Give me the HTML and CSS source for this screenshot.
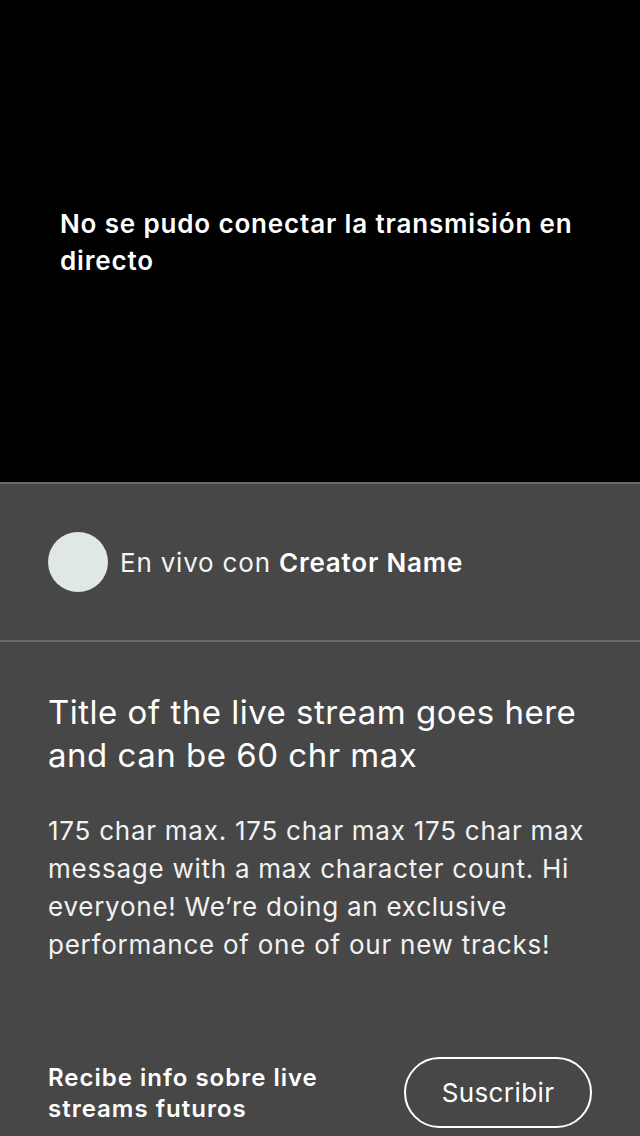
FILE: index.html
```html
<!DOCTYPE html>
<html lang="es">
<head>
<meta charset="utf-8">
<link rel="stylesheet" href="styles.css">
</head>
<body>
<div class="screen">
  <section class="video">
    <p class="video-error">No se pudo conectar la transmisión en directo</p>
  </section>
  <section class="creator">
    <div class="avatar"></div>
    <p class="creator-text">En vivo con <strong>Creator Name</strong></p>
  </section>
  <section class="details">
    <h1 class="title">Title of the live stream goes here and can be 60 chr max</h1>
    <p class="desc">175 char max. 175 char max 175 char max message with a max character count. Hi everyone! We’re doing an exclusive performance of one of our new tracks!</p>
    <div class="subscribe">
      <p class="subscribe-text">Recibe info sobre live streams futuros</p>
      <button class="subscribe-btn">Suscribir</button>
    </div>
  </section>
</div>
</body>
</html>
```

FILE: styles.css
```css
* { box-sizing: border-box; }
html, body {
  margin: 0;
  padding: 0;
  background: #474747;
}
body {
  font-family: Inter, "Noto Sans", sans-serif;
  color: #fff;
  width: 640px;
  height: 1136px;
  overflow: hidden;
}
.screen {
  display: flex;
  flex-direction: column;
  height: 1136px;
}
.video {
  background: #000;
  height: 482px;
  padding: 205px 40px 0 60px;
  flex: none;
}
.video-error {
  margin: 0;
  font-size: 26px;
  line-height: 37px;
  font-weight: 600;
  letter-spacing: 0.85px;
}
.creator {
  flex: none;
  height: 160px;
  border-top: 2px solid #6a6a6a;
  border-bottom: 2px solid #6a6a6a;
  display: flex;
  align-items: center;
  padding-left: 48px;
  gap: 12px;
  background: #474747;
}
.avatar {
  width: 60px;
  height: 60px;
  border-radius: 50%;
  background: #dfe8e5;
  flex: none;
}
.creator-text {
  margin: 0;
  font-size: 26px;
  font-weight: 400;
  color: #f4f4f4;
  letter-spacing: 0.8px;
}
.creator-text strong {
  font-weight: 600;
  color: #fff;
}
.details {
  padding: 49px 40px 0 48px;
  display: flex;
  flex-direction: column;
}
.title {
  margin: 0;
  font-size: 33px;
  line-height: 43px;
  font-weight: 400;
  letter-spacing: 0.5px;
}
.desc {
  margin: 35px 0 0 0;
  font-size: 26px;
  line-height: 38px;
  font-weight: 400;
  color: #f2f2f2;
  letter-spacing: 0.75px;
}
.subscribe {
  margin-top: 93px;
  display: flex;
  align-items: center;
  justify-content: space-between;
  padding-right: 8px;
}
.subscribe-text {
  margin: 0;
  width: 300px;
  font-size: 24px;
  line-height: 31px;
  font-weight: 600;
  letter-spacing: 1px;
}
.subscribe-btn {
  width: 188px;
  height: 71px;
  border: 2px solid #fff;
  border-radius: 36px;
  background: transparent;
  color: #fff;
  font-family: Inter, "Noto Sans", sans-serif;
  font-size: 26px;
  font-weight: 400;
  padding: 0;
  letter-spacing: 0.4px;
}
```
